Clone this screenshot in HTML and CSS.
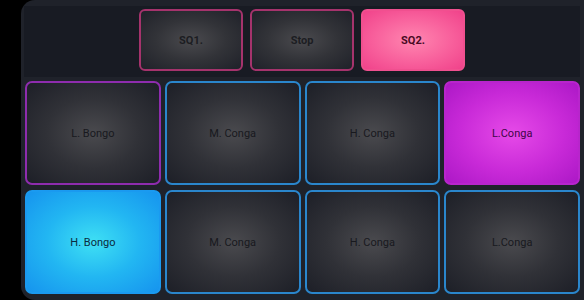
FILE: index.html
```html
<!DOCTYPE html>
<html lang="en">
<head>
    <meta charset="UTF-8">
    <meta name="viewport" content="width=device-width, initial-scale=1.0">
    <title>Drum Pads</title>
    <link rel="stylesheet" href="styles.css">
</head>
<body>
    <div id="panel">
        <div id="topBar">
            <button class="seq">SQ1.</button>
            <button class="seq">Stop</button>
            <button class="seq seq-on">SQ2.</button>
        </div>
        <div id="pads">
            <button class="pad pad-purple">L. Bongo</button>
            <button class="pad">M. Conga</button>
            <button class="pad">H. Conga</button>
            <button class="pad pad-magenta">L.Conga</button>
            <button class="pad pad-cyan">H. Bongo</button>
            <button class="pad">M. Conga</button>
            <button class="pad">H. Conga</button>
            <button class="pad">L.Conga</button>
        </div>
    </div>
</body>
</html>
```

FILE: styles.css
```css
html, body {
    margin: 0;
    height: 300px;
    background-color: #000;
    overflow: hidden;
}
body {
    font-family: Roboto, 'Liberation Sans', sans-serif;
}
#panel {
    margin-left: 21px;
    height: 300px;
    box-sizing: border-box;
    background-color: #1f222a;
    border-radius: 14px 0 0 14px;
    padding: 6px 4px 6px 3px;
    display: flex;
    flex-direction: column;
    gap: 4px;
}
#topBar {
    height: 71px;
    box-sizing: border-box;
    background-color: #181b23;
    display: flex;
    justify-content: center;
    align-items: flex-start;
    padding-top: 3px;
    gap: 7px;
}
button {
    font-family: inherit;
    cursor: pointer;
    padding: 0;
}
.seq {
    width: 104px;
    height: 62px;
    border: 2px solid #a5336c;
    border-radius: 6px;
    background: radial-gradient(ellipse at center, #4a4a4e 0%, #323338 50%, #1f2129 100%);
    color: #1c1d22;
    font-size: 11px;
    font-weight: bold;
}
.seq-on {
    border-color: #f0508f;
    background: radial-gradient(ellipse at center, #ff86b0 0%, #f8609c 55%, #f0428a 100%);
    color: #4a0a24;
}
#pads {
    flex: 1;
    display: grid;
    grid-template-columns: repeat(4, 1fr);
    grid-template-rows: repeat(2, 1fr);
    gap: 5px 4px;
    padding-left: 1px;
}
.pad {
    border: 2px solid #2a86cc;
    border-radius: 7px;
    background: radial-gradient(ellipse at center, #4a4a4e 0%, #303137 50%, #1d1f27 100%);
    color: #18191e;
    font-size: 11px;
}
.pad-purple {
    border-color: #8e2cae;
}
.pad-magenta {
    border-color: #b825cc;
    background: radial-gradient(ellipse at center, #e64ae8 0%, #c92ad8 55%, #ac18c6 100%);
    color: #3e0646;
}
.pad-cyan {
    border-color: #1a9af0;
    background: radial-gradient(ellipse at center, #3fe0f4 0%, #22b6f2 50%, #1694ee 100%);
    color: #0b2a40;
}
```
